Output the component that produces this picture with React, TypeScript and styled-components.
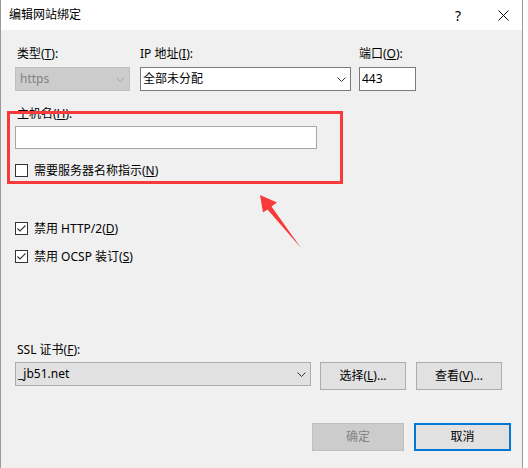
import React from 'react';
import styled, { createGlobalStyle } from 'styled-components';

const GlobalStyle = createGlobalStyle`
  html, body {
    margin: 0;
    padding: 0;
    background: #ffffff;
  }
  body {
    font-family: 'Noto Sans', 'Noto Sans CJK SC', sans-serif;
    font-size: 12px;
    color: #000;
  }
`;

const Window = styled.div`
  position: relative;
  box-sizing: border-box;
  width: 523px;
  height: 468px;
  border-left: 1px solid #9a9a9a;
  border-right: 1px solid #9a9a9a;
  background: #f0f0f0;
  display: flex;
  flex-direction: column;
`;

const TitleBar = styled.div`
  height: 30px;
  flex: none;
  background: #ffffff;
  display: flex;
  align-items: center;
  padding-left: 8px;
`;

const TitleText = styled.div`
  flex: 1;
  line-height: 16px;
`;

const TitleButton = styled.div<{ $mr?: number }>`
  width: 38px;
  height: 30px;
  display: flex;
  align-items: center;
  justify-content: center;
  font-size: 14px;
  margin-right: ${(p) => p.$mr || 0}px;
`;

const Body = styled.div`
  display: flex;
  flex-direction: column;
  padding: 0 11px 0 14px;
`;

const Row = styled.div<{ $mt?: number }>`
  display: flex;
  align-items: flex-start;
  margin-top: ${(p) => p.$mt || 0}px;
`;

const Field = styled.div<{ $width: number; $ml?: number }>`
  display: flex;
  flex-direction: column;
  width: ${(p) => p.$width}px;
  margin-left: ${(p) => p.$ml || 0}px;
`;

const Label = styled.div<{ $mb?: number; $pl?: number }>`
  line-height: 16px;
  height: 16px;
  white-space: nowrap;
  margin-bottom: ${(p) => p.$mb ?? 5}px;
  padding-left: ${(p) => p.$pl || 0}px;
`;

type SelectVariant = 'disabled' | 'white' | 'gray';

const selectColors: Record<SelectVariant, { bg: string; border: string; text: string; arrow: string }> = {
  disabled: { bg: '#cccccc', border: '#bfbfbf', text: '#838383', arrow: '#a6a6a6' },
  white: { bg: '#ffffff', border: '#7a7a7a', text: '#000000', arrow: '#333333' },
  gray: { bg: '#e1e1e1', border: '#adadad', text: '#000000', arrow: '#333333' },
};

const SelectBox = styled.div<{ $variant: SelectVariant; $width?: number }>`
  box-sizing: border-box;
  height: 24px;
  width: ${(p) => (p.$width ? `${p.$width}px` : '100%')};
  background: ${(p) => selectColors[p.$variant].bg};
  border: 1px solid ${(p) => selectColors[p.$variant].border};
  color: ${(p) => selectColors[p.$variant].text};
  display: flex;
  align-items: center;
  padding: 0 4px 0 ${(p) => (p.$variant === 'disabled' ? 4 : 2)}px;
  line-height: 16px;
`;

const SelectText = styled.span`
  flex: 1;
  white-space: nowrap;
`;

const TextBox = styled.div<{ $width: number; $height: number; $border: string }>`
  box-sizing: border-box;
  width: ${(p) => p.$width}px;
  height: ${(p) => p.$height}px;
  background: #ffffff;
  border: 1px solid ${(p) => p.$border};
  display: flex;
  align-items: center;
  padding-left: 2px;
  line-height: 16px;
`;

const CheckRow = styled.div<{ $mt: number }>`
  display: flex;
  align-items: center;
  height: 16px;
  margin-top: ${(p) => p.$mt}px;
  white-space: nowrap;
`;

const Box = styled.div`
  box-sizing: border-box;
  width: 13px;
  height: 13px;
  border: 1px solid #333333;
  background: #ffffff;
  margin-right: 6px;
  display: flex;
  align-items: center;
  justify-content: center;
`;

const Button = styled.div<{ $width: number; $variant?: 'normal' | 'disabled' | 'default' }>`
  box-sizing: border-box;
  width: ${(p) => p.$width}px;
  height: 28px;
  display: flex;
  align-items: center;
  justify-content: center;
  line-height: 16px;
  white-space: nowrap;
  background: ${(p) => (p.$variant === 'disabled' ? '#cccccc' : '#e1e1e1')};
  color: ${(p) => (p.$variant === 'disabled' ? '#838383' : '#000000')};
  border: ${(p) =>
    p.$variant === 'default'
      ? '2px solid #0078d7'
      : p.$variant === 'disabled'
        ? '1px solid #bfbfbf'
        : '1px solid #adadad'};
`;

const Footer = styled.div`
  display: flex;
  justify-content: flex-end;
  gap: 10px;
  margin-top: 33px;
`;

const Highlight = styled.div`
  position: absolute;
  left: 6px;
  top: 111px;
  width: 336px;
  height: 73px;
  box-sizing: border-box;
  border: 3px solid #f83a3a;
  pointer-events: none;
`;

const ArrowSvg = styled.svg`
  position: absolute;
  left: 0;
  top: 0;
  pointer-events: none;
`;

const Chevron: React.FC<{ color: string }> = ({ color }) => (
  <svg width="9" height="5" viewBox="0 0 9 5">
    <polyline points="0.5,0.5 4.5,4.5 8.5,0.5" fill="none" stroke={color} strokeWidth="1" />
  </svg>
);

const Check = () => (
  <svg width="11" height="11" viewBox="0 0 11 11">
    <polyline points="1.5,5.5 4,8 9.5,2.5" fill="none" stroke="#333" strokeWidth="1.1" />
  </svg>
);

const Select: React.FC<{ variant: SelectVariant; text: string; width?: number }> = ({ variant, text, width }) => (
  <SelectBox $variant={variant} $width={width}>
    <SelectText>{text}</SelectText>
    <Chevron color={selectColors[variant].arrow} />
  </SelectBox>
);

export default function App() {
  return (
    <>
      <GlobalStyle />
      <Window>
        <TitleBar>
          <TitleText>编辑网站绑定</TitleText>
          <TitleButton $mr={7}>?</TitleButton>
          <TitleButton>
            <svg width="11" height="11" viewBox="0 0 11 11">
              <path d="M0.5 0.5 L10.5 10.5 M10.5 0.5 L0.5 10.5" stroke="#111" strokeWidth="1" />
            </svg>
          </TitleButton>
        </TitleBar>
        <Body>
          <Row $mt={16}>
            <Field $width={115}>
              <Label $pl={2}>类型(<u>T</u>):</Label>
              <Select variant="disabled" text="https" />
            </Field>
            <Field $width={211} $ml={10}>
              <Label>IP 地址(<u>I</u>):</Label>
              <Select variant="white" text="全部未分配" />
            </Field>
            <Field $width={57} $ml={8}>
              <Label>端口(<u>O</u>):</Label>
              <TextBox $width={57} $height={24} $border="#7a7a7a">443</TextBox>
            </Field>
          </Row>

          <Row $mt={15}>
            <Field $width={302}>
              <Label $pl={2} $mb={4}>主机名(<u>H</u>):</Label>
              <TextBox $width={302} $height={23} $border="#a6a6a6" />
            </Field>
          </Row>

          <CheckRow $mt={13}>
            <Box />
            需要服务器名称指示(<u>N</u>)
          </CheckRow>

          <CheckRow $mt={42}>
            <Box>
              <Check />
            </Box>
            禁用 HTTP/2(<u>D</u>)
          </CheckRow>
          <CheckRow $mt={12}>
            <Box>
              <Check />
            </Box>
            禁用 OCSP 装订(<u>S</u>)
          </CheckRow>

          <Row $mt={78}>
            <Field $width={500}>
              <Label $pl={2} $mb={4}>SSL 证书(<u>F</u>):</Label>
              <Row>
                <Select variant="gray" text="_jb51.net" width={296} />
                <Field $width={86} $ml={9}>
                  <Button $width={86}>选择(<u>L</u>)...</Button>
                </Field>
                <Field $width={86} $ml={10}>
                  <Button $width={86}>查看(<u>V</u>)...</Button>
                </Field>
              </Row>
            </Field>
          </Row>

          <Footer>
            <Button $width={92} $variant="disabled">确定</Button>
            <Button $width={97} $variant="default">取消</Button>
          </Footer>
        </Body>

        <Highlight />
        <ArrowSvg width="523" height="468" viewBox="0 0 523 468">
          <polygon
            points="259,195 276,202.5 270.5,206.5 300,248 266.5,209.5 262,212.5"
            fill="#f83a3a"
          />
        </ArrowSvg>
      </Window>
    </>
  );
}
